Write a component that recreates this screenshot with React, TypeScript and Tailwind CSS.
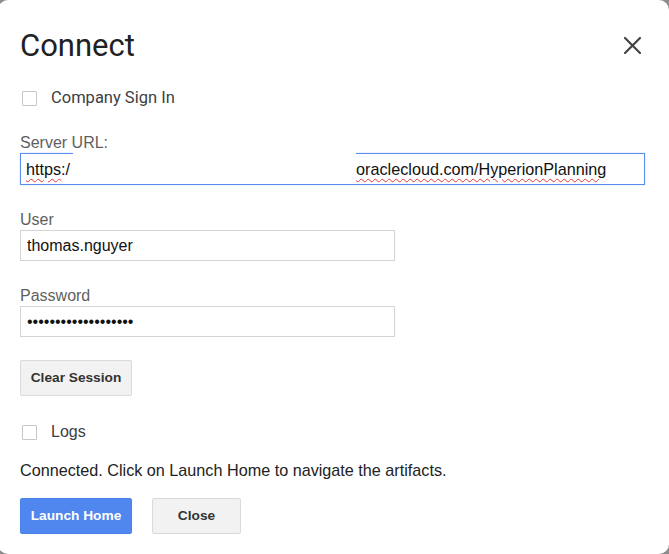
const arial = "font-['Liberation_Sans',Arial,sans-serif]";
const roboto = "font-['Roboto',sans-serif]";

function Checkbox({ label, className = "" }: { label: string; className?: string }) {
  return (
    <label className={`flex h-5 items-center ${className}`}>
      <span className="ml-[2px] h-[15px] w-[15px] rounded-[1px] border border-[#c6c6c6] bg-white" />
      <span className="ml-[14px] leading-5 text-[#3c4043]">{label}</span>
    </label>
  );
}

function Field({ label, value, className = "" }: { label: string; value: string; className?: string }) {
  return (
    <div className={className}>
      <div className="text-[16px] leading-5 text-[#5f5f5f]">{label}</div>
      <div className="flex h-[31px] w-[375px] items-center border border-[#d4d4d4] bg-white px-[6px] text-[16px] text-[#111]">
        {value}
      </div>
    </div>
  );
}

export default function App() {
  return (
    <div className="h-[554px] w-[669px] overflow-hidden bg-[#8c8c8c]">
      <div className={`h-[554px] w-[671px] -ml-[2px] rounded-[10px] bg-white pl-[22px] pt-[28px] ${arial}`}>
        {/* Header */}
        <div className="flex h-9 items-center justify-between pr-[28px]">
          <h1 className={`${roboto} text-[31px] leading-9 font-normal text-[#202124]`}>Connect</h1>
          <svg width="17" height="17" viewBox="0 0 17 17" className="mt-[-2px]">
            <path d="M1 1L16 16M16 1L1 16" stroke="#454545" strokeWidth="2.2" strokeLinecap="square" />
          </svg>
        </div>

        <Checkbox label="Company Sign In" className={`mt-[24px] text-[16.5px] ${roboto}`} />

        {/* Server URL */}
        <div className="mt-[25px]">
          <div className="text-[16px] leading-5 text-[#5f5f5f]">Server URL:</div>
          <div className="relative flex h-[32px] w-[625px] items-center border border-[#5b8def] bg-white pl-[5px] text-[16.2px] text-[#111] shadow-[0_0_1px_#9dbcf5]">
            <span className="underline decoration-wavy decoration-[#e53935] decoration-1 underline-offset-[3px]">https</span>
            <span>:/</span>
            <span className="inline-block w-[286px]" />
            <span className="underline decoration-wavy decoration-[#e53935] decoration-1 underline-offset-[3px]">
              oraclecloud.com/HyperionPlanning
            </span>
            <span className="absolute left-[52px] top-[-2px] h-[4px] w-[283px] bg-white" />
          </div>
        </div>

        <Field label="User" value="thomas.nguyer" className="mt-[25px]" />
        <Field label="Password" value={"•".repeat(19)} className="mt-[25px]" />

        <button className="mt-[23px] h-9 w-[112px] rounded-[2px] border border-[#dadada] bg-[#f2f2f2] text-[13.7px] font-bold text-[#333]">
          Clear Session
        </button>

        <Checkbox label="Logs" className="mt-[26px] text-[16px]" />

        <p className="mt-[18px] text-[16.2px] leading-5 text-[#222]">
          Connected. Click on Launch Home to navigate the artifacts.
        </p>

        <div className="mt-[18px] flex gap-5">
          <button className="h-9 w-[112px] rounded-[2px] border border-[#4b83ea] bg-[#4f87ee] text-[13.7px] font-bold text-white">
            Launch Home
          </button>
          <button className="h-9 w-[89px] rounded-[2px] border border-[#dadada] bg-[#f2f2f2] text-[13.7px] font-bold text-[#333]">
            Close
          </button>
        </div>
      </div>
    </div>
  );
}
